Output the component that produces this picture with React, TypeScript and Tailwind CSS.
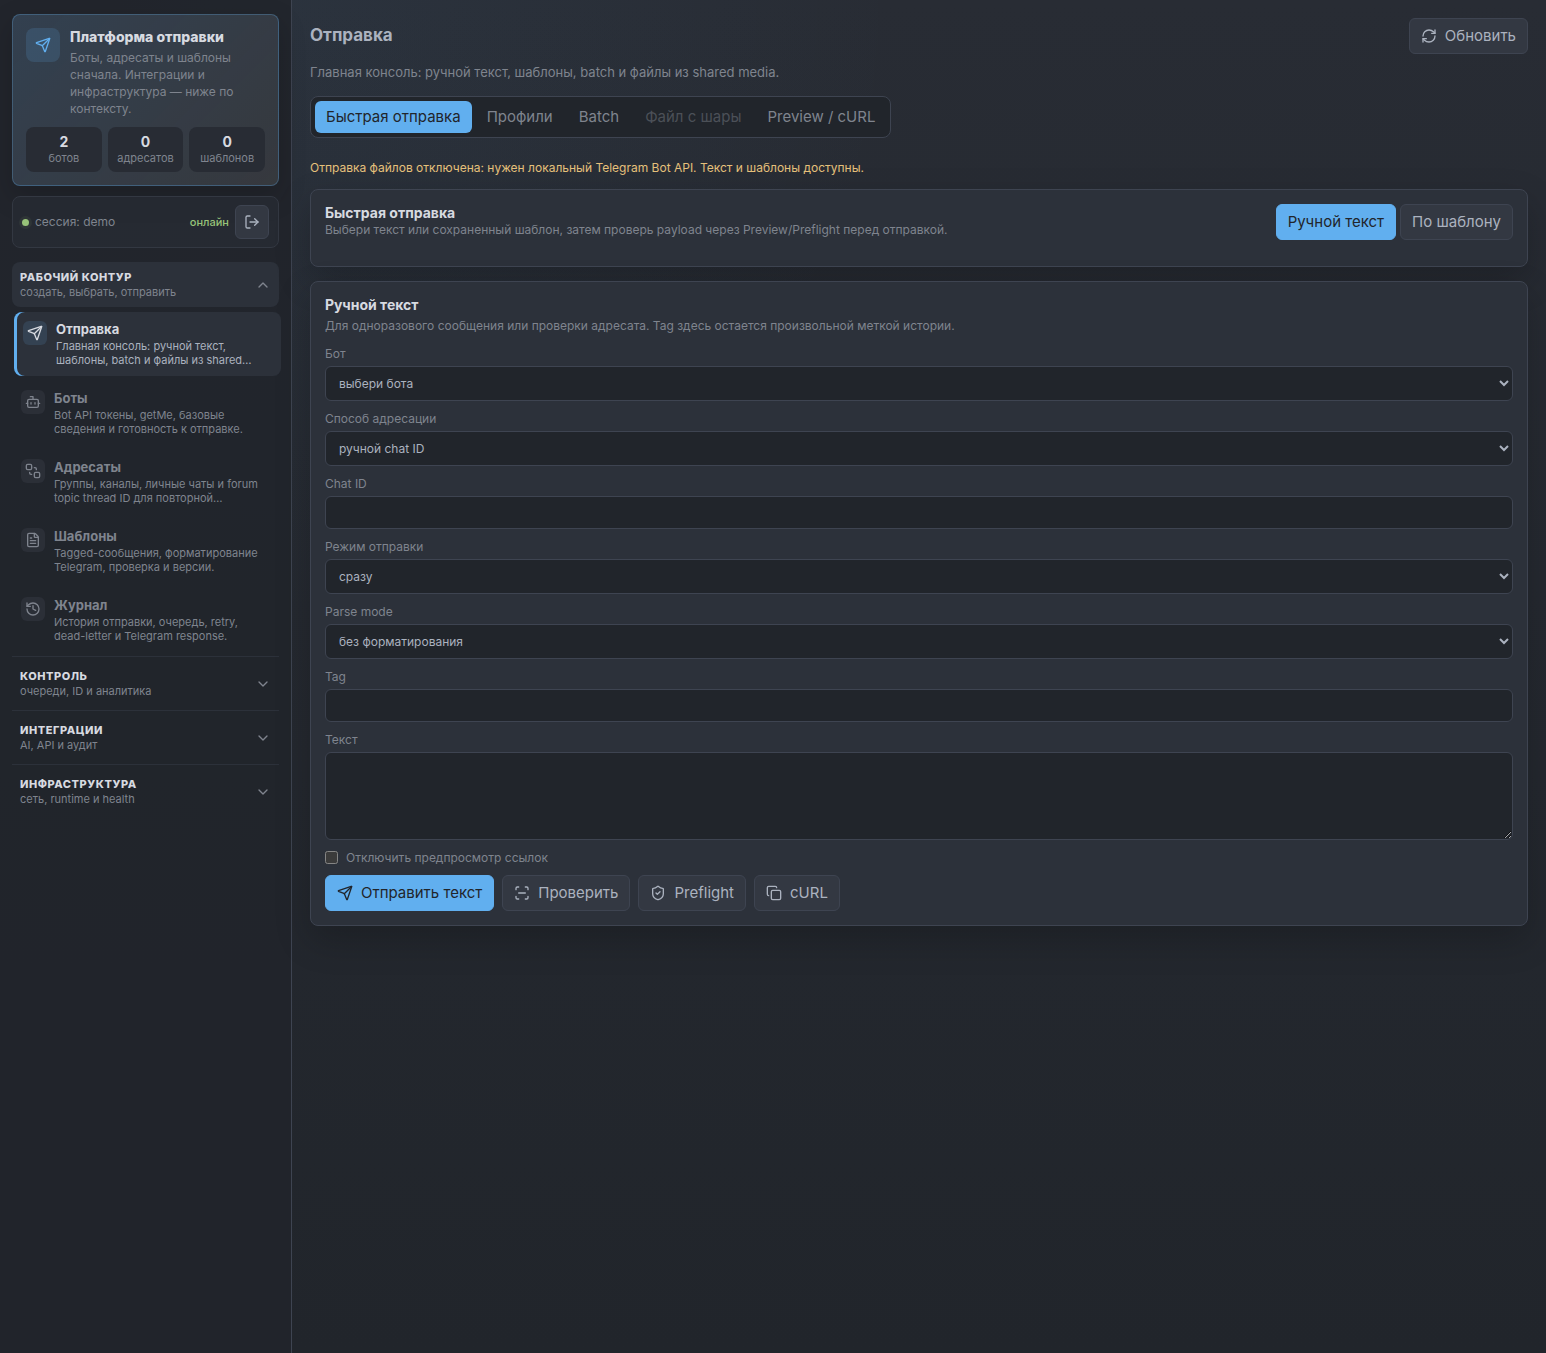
import clsx from "clsx";
import {
  Bot,
  ChevronDown,
  ChevronUp,
  Copy,
  FileText,
  History,
  LogOut,
  LucideIcon,
  RefreshCw,
  ScanLine,
  Send,
  SendToBack,
  ShieldCheck,
} from "lucide-react";
import { ReactNode, useState } from "react";

const stats = [
  { value: 2, label: "ботов" },
  { value: 0, label: "адресатов" },
  { value: 0, label: "шаблонов" },
];

const navItems: { icon: LucideIcon; title: string; text: string }[] = [
  { icon: Send, title: "Отправка", text: "Главная консоль: ручной текст, шаблоны, batch и файлы из shared…" },
  { icon: Bot, title: "Боты", text: "Bot API токены, getMe, базовые сведения и готовность к отправке." },
  { icon: SendToBack, title: "Адресаты", text: "Группы, каналы, личные чаты и forum topic thread ID для повторной…" },
  { icon: FileText, title: "Шаблоны", text: "Tagged-сообщения, форматирование Telegram, проверка и версии." },
  { icon: History, title: "Журнал", text: "История отправки, очередь, retry, dead-letter и Telegram response." },
];

const closedGroups = [
  { title: "Контроль", text: "очереди, ID и аналитика" },
  { title: "Интеграции", text: "AI, API и аудит" },
  { title: "Инфраструктура", text: "сеть, runtime и health" },
];

const tabs = ["Быстрая отправка", "Профили", "Batch", "Файл с шары", "Preview / cURL"];

const fieldClass = "w-full rounded-md border border-[#3e4451] bg-[#21252b] px-[9px] text-xs text-[#abb2bf]";

const Button = ({ icon: Icon, primary, children }: { icon?: LucideIcon; primary?: boolean; children: ReactNode }) => (
  <button
    type="button"
    className={clsx(
      "flex h-9 items-center gap-2 rounded-md border px-[11px] text-[15px] whitespace-nowrap",
      primary ? "border-[#61afef] bg-[#61afef] text-[#21252b]" : "border-[#3e4451] bg-[#333842] text-[#abb2bf]"
    )}
  >
    {Icon && <Icon className="size-4" />}
    {children}
  </button>
);

const GroupHeader = ({ title, text, open }: { title: string; text: string; open?: boolean }) => {
  const Chevron = open ? ChevronUp : ChevronDown;
  return (
    <button
      type="button"
      aria-expanded={!!open}
      className={clsx("flex h-[45px] w-full items-center justify-between rounded-lg px-2 text-left", open && "bg-[#2c313a]")}
    >
      <span>
        <span className="block text-[11px] leading-[15px] font-extrabold tracking-wider text-[#d7dae0] uppercase">
          {title}
        </span>
        <span className="block text-[11px] leading-[15px] text-[#7f848e]">{text}</span>
      </span>
      <Chevron className="size-4 text-[#7f848e]" />
    </button>
  );
};

const NavItem = ({ icon: Icon, title, text, active }: { icon: LucideIcon; title: string; text: string; active?: boolean }) => (
  <a
    href="#"
    className={clsx(
      "flex h-16 gap-[9px] rounded-lg p-[9px]",
      active && "translate-x-0.5 bg-[#2c313a] shadow-[inset_3px_0_0_#61afef]"
    )}
  >
    <span
      className={clsx(
        "flex size-6 shrink-0 items-center justify-center rounded-md",
        active ? "bg-[#344252] text-[#d7dae0]" : "bg-[#2b2f37] text-[#7f848e]"
      )}
    >
      <Icon className="size-4" />
    </span>
    <span className="min-w-0">
      <span className={clsx("mb-0.5 block text-[13px] leading-4 font-bold", active ? "text-[#d7dae0]" : "text-[#7f848e]")}>
        {title}
      </span>
      <span className={clsx("block text-[11px] leading-[14px]", active ? "text-[#abb2bf]" : "text-[#7f848e]")}>{text}</span>
    </span>
  </a>
);

const Sidebar = () => (
  <aside className="w-[292px] shrink-0 border-r border-[#3e4451] bg-[#21252b]/90 px-3 py-3.5">
    <section className="rounded-lg border border-[#61afef]/30 bg-[#2c313a] bg-linear-135 from-[#61afef]/12 to-[#e5c07b]/5 p-[13px] shadow-[0_10px_28px_rgba(0,0,0,0.18)]">
      <div className="mb-2.5 flex gap-2.5">
        <div className="flex size-[34px] shrink-0 items-center justify-center rounded-lg bg-[#61afef]/16 text-[#61afef]">
          <Send className="size-4" />
        </div>
        <div>
          <h2 className="mb-1 text-sm leading-[17px] font-extrabold text-[#d7dae0]">Платформа отправки</h2>
          <p className="text-xs leading-[17px] text-[#7f848e]">
            Боты, адресаты и шаблоны сначала. Интеграции и инфраструктура — ниже по контексту.
          </p>
        </div>
      </div>
      <dl className="grid grid-cols-3 gap-1.5">
        {stats.map((stat) => (
          <div
            key={stat.label}
            className="flex h-[45px] flex-col-reverse items-center justify-center gap-px rounded-lg bg-[#282c34]"
          >
            <dt className="text-[11px] leading-[15px] text-[#7f848e]">{stat.label}</dt>
            <dd className="text-sm leading-[17px] font-bold text-[#d7dae0]">{stat.value}</dd>
          </div>
        ))}
      </dl>
    </section>

    <div className="mt-2.5 flex items-center gap-1.5 rounded-lg border border-[#333842] bg-[#282c34]/70 px-[9px] py-2 text-xs">
      <span className="size-[7px] rounded-full bg-[#98c379] shadow-[0_0_0_3px_rgba(152,195,121,0.08)]" />
      <span className="flex-1 text-[#7f848e]">сессия: demo</span>
      <span className="text-[11px] font-medium text-[#98c379]">онлайн</span>
      <button
        type="button"
        aria-label="Выйти"
        className="flex size-[34px] items-center justify-center rounded-md border border-[#3e4451] bg-[#333842] text-[#abb2bf]"
      >
        <LogOut className="size-4" />
      </button>
    </div>

    <nav className="mt-3.5 flex flex-col gap-1">
      <GroupHeader title="Рабочий контур" text="создать, выбрать, отправить" open />
      <div className="mt-px flex flex-col gap-[5px]">
        {navItems.map((item, i) => (
          <NavItem key={item.title} {...item} active={i === 0} />
        ))}
      </div>
      {closedGroups.map((group) => (
        <div key={group.title} className="border-t border-[#2c313a] pt-1">
          <GroupHeader {...group} />
        </div>
      ))}
    </nav>
  </aside>
);

type CardProps = { title: string; text: string; gap?: boolean; actions?: ReactNode; children?: ReactNode };

const Card = ({ title, text, gap, actions, children }: CardProps) => (
  <section className="mb-3.5 rounded-lg border border-[#3e4451] bg-[#2c313a] p-3.5 shadow-[0_14px_36px_rgba(0,0,0,0.2)]">
    <div className="mb-3 flex items-start justify-between">
      <div className={clsx("flex flex-col", gap && "gap-1")}>
        <h2 className="text-sm leading-[18px] font-bold text-[#d7dae0]">{title}</h2>
        <p className="text-xs leading-4 text-[#7f848e]">{text}</p>
      </div>
      {actions}
    </div>
    {children}
  </section>
);

const Field = ({ label, children }: { label: string; children: ReactNode }) => (
  <label className="flex flex-col gap-1 text-xs leading-4 text-[#7f848e]">
    {label}
    {children}
  </label>
);

const SelectField = ({ label, value }: { label: string; value: string }) => (
  <Field label={label}>
    <select className={clsx(fieldClass, "h-[35px]")}>
      <option>{value}</option>
    </select>
  </Field>
);

const InputField = ({ label }: { label: string }) => (
  <Field label={label}>
    <input type="text" className={clsx(fieldClass, "h-[33px]")} />
  </Field>
);

const App = () => {
  const [tab, setTab] = useState(tabs[0]);

  return (
    <div className="flex min-h-screen bg-[radial-gradient(circle_at_18%_0%,rgba(97,175,239,0.05),transparent_34%),linear-gradient(180deg,#282c34,#21252b)] font-[Inter,sans-serif] [color-scheme:dark]">
      <Sidebar />
      <main className="min-w-0 flex-1 p-[18px]">
        <header className="flex items-center justify-between">
          <h1 className="text-[17px] font-bold text-[#abb2bf]">Отправка</h1>
          <Button icon={RefreshCw}>Обновить</Button>
        </header>
        <p className="mt-2.5 text-[13px] leading-4 text-[#7f848e]">
          Главная консоль: ручной текст, шаблоны, batch и файлы из shared media.
        </p>

        <div className="mt-4 flex w-fit gap-1 rounded-lg border border-[#3e4451] bg-[#21252b] p-1" role="tablist">
          {tabs.map((name) => (
            <button
              key={name}
              type="button"
              role="tab"
              aria-selected={tab === name}
              disabled={name === "Файл с шары"}
              onClick={() => setTab(name)}
              className={clsx(
                "h-8 rounded-md px-[11px] text-[15px] disabled:opacity-45",
                tab === name ? "bg-[#61afef] text-[#21252b]" : "text-[#7f848e]"
              )}
            >
              {name}
            </button>
          ))}
        </div>

        <p className="mt-[22px] mb-[13px] text-xs leading-4 text-[#e5c07b]">
          Отправка файлов отключена: нужен локальный Telegram Bot API. Текст и шаблоны доступны.
        </p>

        <Card
          title="Быстрая отправка"
          text="Выбери текст или сохраненный шаблон, затем проверь payload через Preview/Preflight перед отправкой."
          actions={
            <div className="flex gap-1">
              <Button primary>Ручной текст</Button>
              <Button>По шаблону</Button>
            </div>
          }
        />

        <Card
          title="Ручной текст"
          text="Для одноразового сообщения или проверки адресата. Tag здесь остается произвольной меткой истории."
          gap
        >
          <form className="flex flex-col gap-2.5">
            <SelectField label="Бот" value="выбери бота" />
            <SelectField label="Способ адресации" value="ручной chat ID" />
            <InputField label="Chat ID" />
            <SelectField label="Режим отправки" value="сразу" />
            <SelectField label="Parse mode" value="без форматирования" />
            <InputField label="Tag" />
            <Field label="Текст">
              <textarea className={clsx(fieldClass, "h-[88px] resize-y py-2")} />
            </Field>
            <label className="flex h-[15px] items-center gap-2 text-xs text-[#7f848e]">
              <input type="checkbox" className="size-[13px]" />
              Отключить предпросмотр ссылок
            </label>
            <div className="flex flex-wrap gap-2">
              <Button icon={Send} primary>
                Отправить текст
              </Button>
              <Button icon={ScanLine}>Проверить</Button>
              <Button icon={ShieldCheck}>Preflight</Button>
              <Button icon={Copy}>cURL</Button>
            </div>
          </form>
        </Card>
      </main>
    </div>
  );
};

export default App;
